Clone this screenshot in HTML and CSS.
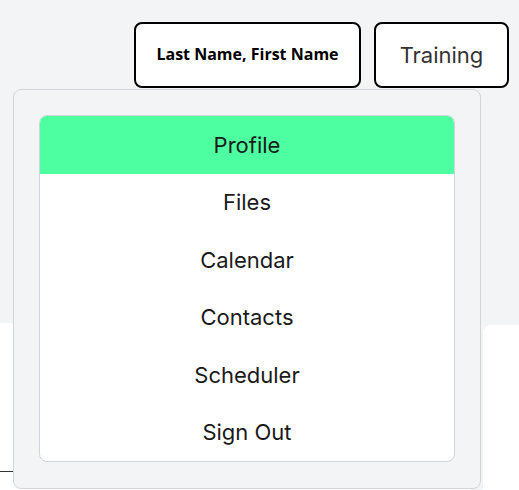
FILE: index.html
```html
<!DOCTYPE html>
<html>
<head>
<meta charset="utf-8">
<link rel="stylesheet" href="styles.css">
</head>
<body>
<header class="topbar">
  <button class="btn btn-user">Last Name, First Name</button>
  <button class="btn btn-training">Training</button>
</header>
<main class="content">
  <section class="card card-left"><div class="row"></div></section>
  <section class="card card-right"></section>
</main>
<div class="dropdown">
  <ul class="menu">
    <li class="item active">Profile</li>
    <li class="item">Files</li>
    <li class="item">Calendar</li>
    <li class="item">Contacts</li>
    <li class="item">Scheduler</li>
    <li class="item">Sign Out</li>
  </ul>
</div>
</body>
</html>
```
FILE: styles.css
```css
* { box-sizing: border-box; }
html, body { margin: 0; padding: 0; }
body {
  background: #f3f4f6;
  width: 519px;
  height: 490px;
  overflow: hidden;
  position: relative;
  font-family: Inter, Roboto, "Liberation Sans", sans-serif;
}
.topbar {
  display: flex;
  justify-content: flex-end;
  gap: 13px;
  padding: 22px 10px 0 0;
}
.btn {
  height: 66px;
  border: 2px solid #000;
  border-radius: 8px;
  background: #fff;
  padding: 0;
  margin: 0;
}
.btn-user {
  width: 227px;
  font-family: "Open Sans", "Liberation Sans", sans-serif;
  font-weight: 700;
  font-size: 16px;
  color: #000;
  padding-bottom: 3px;
}
.btn-training {
  width: 135px;
  font-family: Inter, Roboto, sans-serif;
  font-size: 22px;
  color: #333;
}
.content {
  display: flex;
  gap: 13px;
  margin-top: 235px;
  align-items: flex-start;
}
.card { background: #fff; }
.card-left {
  width: 470px;
  height: 167px;
}
.card-left .row {
  height: 149px;
  border-bottom: 1px solid #333;
}
.card-right {
  flex: 1;
  height: 165px;
  margin-top: 2px;
  border-top-left-radius: 8px;
}
.dropdown {
  position: absolute;
  left: 13px;
  top: 89px;
  width: 468px;
  height: 400px;
  background: #f3f4f6;
  border: 1px solid #d1d5db;
  border-radius: 8px;
  padding: 25px;
}
.menu {
  list-style: none;
  margin: 0;
  padding: 0;
  background: #fff;
  border: 1px solid #d1d5db;
  border-radius: 8px;
  overflow: hidden;
  display: flex;
  flex-direction: column;
}
.item {
  height: 57.5px;
  display: flex;
  align-items: center;
  justify-content: center;
  font-size: 22px;
  color: #1a1a1a;
}
.item.active { background: #4dffa0; }
```
